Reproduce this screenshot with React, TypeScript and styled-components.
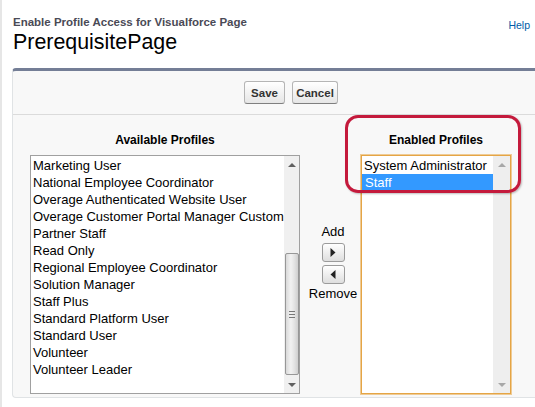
import React from "react";
import styled, { createGlobalStyle } from "styled-components";

const Global = createGlobalStyle`
  html, body { margin: 0; padding: 0; background: #fff; overflow: hidden; }
  body { font-family: "Liberation Sans", Arial, sans-serif; }
`;

const Page = styled.div`
  width: 535px;
  height: 407px;
  box-sizing: border-box;
  border-left: 2px solid #e6e6e6;
  position: relative;
  overflow: hidden;
`;

const Header = styled.div`
  display: flex;
  justify-content: space-between;
  align-items: flex-start;
  padding: 15px 5px 0 11px;
`;

const TitleBlock = styled.div`
  display: flex;
  flex-direction: column;
`;

const PageType = styled.div`
  font-size: 11.5px;
  line-height: 14px;
  font-weight: bold;
  color: #4a4a56;
`;

const PageTitle = styled.h1`
  margin: 0;
  font-size: 21.4px;
  line-height: 26px;
  font-weight: normal;
  color: #000;
`;

const HelpLink = styled.a`
  font-size: 10.5px;
  line-height: 14px;
  margin-top: 3px;
  color: #015ba7;
  text-decoration: none;
`;

const Panel = styled.div`
  margin: 13px 0 0 10px;
  width: 556px;
  background: #f8f8f8;
  border-top: 3px solid #747e96;
  border-left: 1px solid #e0e3e5;
  border-bottom: 1px solid #e0e3e5;
  border-radius: 4px 0 0 4px;
  position: relative;
  padding-bottom: 3px;
`;

const ButtonRow = styled.div`
  display: flex;
  justify-content: center;
  gap: 7px;
  padding: 10px 0 10px;
  border-bottom: 1px solid #dbdbdb;
`;

const Btn = styled.button<{ $w: number }>`
  width: ${(p) => p.$w}px;
  height: 23px;
  padding: 0;
  font-family: "Liberation Sans", Arial, sans-serif;
  font-size: 11.5px;
  font-weight: bold;
  color: #333;
  background: linear-gradient(#ffffff, #e6e6e6);
  border: 1px solid #b5b5b5;
  border-bottom-color: #7f7f7f;
  border-radius: 3px;
`;

const Body = styled.div`
  display: grid;
  grid-template-columns: 270px 61px 150px;
  padding: 18px 0 0 17px;
`;

const Column = styled.div`
  display: flex;
  flex-direction: column;
  align-items: stretch;
`;

const ColHeader = styled.div`
  font-size: 12px;
  line-height: 15px;
  font-weight: bold;
  color: #000;
  text-align: center;
  margin-bottom: 7px;
`;

const ListBox = styled.div<{ $focus?: boolean }>`
  height: 239px;
  box-sizing: border-box;
  display: flex;
  background: #fff;
  border: 1px solid ${(p) => (p.$focus ? "#e5a545" : "#a0a0a0")};
  box-shadow: ${(p) => (p.$focus ? "0 0 0 1px rgba(229,165,69,0.55)" : "none")};
`;

const Items = styled.div`
  flex: 1;
  min-width: 0;
  display: flex;
  flex-direction: column;
  padding-top: 1px;
`;

const Item = styled.div<{ $sel?: boolean }>`
  font-size: 13px;
  line-height: 17px;
  padding-left: ${(p) => (p.$sel ? "3px" : "2px")};
  white-space: nowrap;
  overflow: hidden;
  color: ${(p) => (p.$sel ? "#fff" : "#000")};
  background: ${(p) => (p.$sel ? "#3399ff" : "transparent")};
`;

const ScrollBar = styled.div<{ $disabled?: boolean; $w: number }>`
  width: ${(p) => p.$w}px;
  flex: none;
  display: flex;
  flex-direction: column;
  background: ${(p) => (p.$disabled ? "#eeeeee" : "#f0f0f0")};
`;

const Arrow = styled.div<{ $down?: boolean; $disabled?: boolean }>`
  height: 17px;
  flex: none;
  display: flex;
  align-items: center;
  justify-content: center;
  &::after {
    content: "";
    width: 0;
    height: 0;
    border-left: 4px solid transparent;
    border-right: 4px solid transparent;
    ${(p) =>
      p.$down
        ? `border-top: 4px solid ${p.$disabled ? "#a8a8a8" : "#606060"};`
        : `border-bottom: 4px solid ${p.$disabled ? "#a8a8a8" : "#606060"};`}
  }
`;

const Track = styled.div`
  flex: 1;
  display: flex;
  flex-direction: column;
  padding: 0 0 0 1px;
`;

const Thumb = styled.div<{ $top: number; $h: number }>`
  margin-top: ${(p) => p.$top}px;
  height: ${(p) => p.$h}px;
  box-sizing: border-box;
  border: 1px solid #979797;
  border-radius: 2px;
  background: linear-gradient(90deg, #d9d9d9, #f2f2f2 40%, #e3e3e3 70%, #cfcfcf);
  display: flex;
  align-items: center;
  justify-content: center;
`;

const Grip = styled.div`
  width: 6px;
  height: 7px;
  background: repeating-linear-gradient(#777 0 1px, transparent 1px 3px);
`;

const Middle = styled.div`
  display: flex;
  flex-direction: column;
  align-items: center;
  padding-top: 91px;
  padding-left: 5px;
  font-size: 13px;
  line-height: 15px;
  color: #000;
`;

const MoveBtn = styled.button<{ $mt: number }>`
  width: 23px;
  height: 19px;
  margin-top: ${(p) => p.$mt}px;
  padding: 0;
  display: flex;
  align-items: center;
  justify-content: center;
  background: linear-gradient(#ffffff, #dedede);
  border: 1px solid #9b9b9b;
  border-radius: 3px;
`;

const Label = styled.div<{ $mt: number }>`
  margin-top: ${(p) => p.$mt}px;
`;

const Annotation = styled.div`
  position: absolute;
  left: 332px;
  top: 44px;
  width: 176px;
  height: 78px;
  box-sizing: border-box;
  border: 3px solid #c41a3c;
  border-radius: 13px;
  box-shadow: 1px 1px 2px rgba(0, 0, 0, 0.25);
  pointer-events: none;
`;

const available = [
  "Marketing User",
  "National Employee Coordinator",
  "Overage Authenticated Website User",
  "Overage Customer Portal Manager Custom",
  "Partner Staff",
  "Read Only",
  "Regional Employee Coordinator",
  "Solution Manager",
  "Staff Plus",
  "Standard Platform User",
  "Standard User",
  "Volunteer",
  "Volunteer Leader",
];

const Tri = ({ dir }: { dir: "left" | "right" }) => (
  <svg width="6" height="9" viewBox="0 0 6 9">
    {dir === "right" ? (
      <polygon points="0.5,0 5.5,4.5 0.5,9" fill="#222" />
    ) : (
      <polygon points="5.5,0 0.5,4.5 5.5,9" fill="#222" />
    )}
  </svg>
);

export default function App() {
  return (
    <>
      <Global />
      <Page>
        <Header>
          <TitleBlock>
            <PageType>Enable Profile Access for Visualforce Page</PageType>
            <PageTitle>PrerequisitePage</PageTitle>
          </TitleBlock>
          <HelpLink href="#">Help</HelpLink>
        </Header>
        <Panel>
          <ButtonRow>
            <Btn $w={41}>Save</Btn>
            <Btn $w={46}>Cancel</Btn>
          </ButtonRow>
          <Body>
            <Column>
              <ColHeader>Available Profiles</ColHeader>
              <ListBox>
                <Items>
                  {available.map((a) => (
                    <Item key={a}>{a}</Item>
                  ))}
                </Items>
                <ScrollBar $w={15}>
                  <Arrow />
                  <Track>
                    <Thumb $top={80} $h={122}>
                      <Grip />
                    </Thumb>
                  </Track>
                  <Arrow $down />
                </ScrollBar>
              </ListBox>
            </Column>
            <Middle>
              <Label $mt={0}>Add</Label>
              <MoveBtn $mt={4} aria-label="Add">
                <Tri dir="right" />
              </MoveBtn>
              <MoveBtn $mt={3} aria-label="Remove">
                <Tri dir="left" />
              </MoveBtn>
              <Label $mt={2}>Remove</Label>
            </Middle>
            <Column>
              <ColHeader>Enabled Profiles</ColHeader>
              <ListBox $focus>
                <Items>
                  <Item>System Administrator</Item>
                  <Item $sel>Staff</Item>
                </Items>
                <ScrollBar $w={17} $disabled>
                  <Arrow $disabled />
                  <Track />
                  <Arrow $down $disabled />
                </ScrollBar>
              </ListBox>
            </Column>
          </Body>
          <Annotation />
        </Panel>
      </Page>
    </>
  );
}
